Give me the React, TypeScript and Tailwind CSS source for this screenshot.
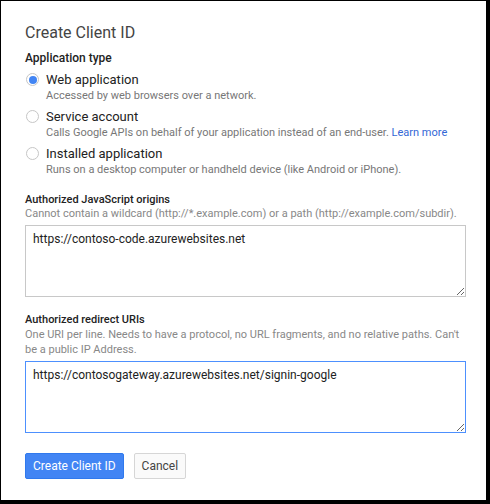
import { useState } from "react";

type Option = { id: string; label: string; desc: string; link?: string };

const options: Option[] = [
  { id: "web", label: "Web application", desc: "Accessed by web browsers over a network." },
  {
    id: "service",
    label: "Service account",
    desc: "Calls Google APIs on behalf of your application instead of an end-user.",
    link: "Learn more",
  },
  {
    id: "installed",
    label: "Installed application",
    desc: "Runs on a desktop computer or handheld device (like Android or iPhone).",
  },
];

function Radio({ checked }: { checked: boolean }) {
  return (
    <span className="w-[13px] h-[13px] rounded-full border border-[#c6c6c6] bg-white flex items-center justify-center shrink-0 mt-[2px]">
      {checked && <span className="w-[8px] h-[8px] rounded-full bg-[#4285f4]" />}
    </span>
  );
}

export default function App() {
  const [type, setType] = useState("web");

  return (
    <div
      className="w-[490px] h-[504px] bg-white border-t border-l border-r-4 border-b-4 border-black text-[#222] overflow-hidden"
      style={{ fontFamily: "Roboto, 'Liberation Sans', Arial, sans-serif" }}
    >
      <div className="pl-[24px] pr-[20px] pt-[22px]">
        <h1 className="text-[16px] leading-[19px] text-[#444] font-normal">Create Client ID</h1>

        {/* Application type */}
        <div className="mt-[8px] text-[12px] leading-[16px] font-medium text-[#222]">Application type</div>
        <div className="mt-[5px] flex flex-col gap-[5px]">
          {options.map((o) => (
            <label key={o.id} className="flex gap-[7px] pl-[1px] cursor-pointer" onClick={() => setType(o.id)}>
              <Radio checked={type === o.id} />
              <div>
                <div className="text-[13px] leading-[17px] text-[#222]">{o.label}</div>
                <div className="text-[11px] leading-[15px] text-[#777]">
                  {o.desc}
                  {o.link && <span className="text-[#3367d6]"> {o.link}</span>}
                </div>
              </div>
            </label>
          ))}
        </div>

        {/* JS origins */}
        <div className="mt-[16px] text-[11px] leading-[14px] font-medium text-[#222]">
          Authorized JavaScript origins
        </div>
        <div className="text-[11px] leading-[14px] text-[#888]">
          Cannot contain a wildcard (http://*.example.com) or a path (http://example.com/subdir).
        </div>
        <textarea
          className="mt-[4px] block w-[441px] h-[72px] border border-[#c8c8c8] px-[7px] py-[5px] text-[12px] leading-[16px] text-[#222] outline-none resize"
          defaultValue="https://contoso-code.azurewebsites.net"
          style={{ fontFamily: "Roboto, 'Liberation Sans', Arial, sans-serif" }}
        />

        {/* Redirect URIs */}
        <div className="mt-[16px] text-[11px] leading-[14px] font-medium text-[#222]">Authorized redirect URIs</div>
        <div className="text-[11px] leading-[15px] text-[#888]">
          One URI per line. Needs to have a protocol, no URL fragments, and no relative paths. Can't be a public IP
          Address.
        </div>
        <textarea
          className="mt-[4px] block w-[441px] h-[72px] border border-[#4d90fe] px-[7px] py-[5px] text-[12px] leading-[16px] text-[#222] outline-none resize"
          defaultValue="https://contosogateway.azurewebsites.net/signin-google"
          style={{ fontFamily: "Roboto, 'Liberation Sans', Arial, sans-serif" }}
        />

        {/* Buttons */}
        <div className="mt-[20px] flex gap-[10px]">
          <button className="h-[26px] px-[7px] rounded-[2px] bg-[#4285f4] border border-[#3079ed] text-white text-[12px]">
            Create Client ID
          </button>
          <button className="h-[26px] px-[7px] rounded-[2px] bg-[#fafafa] border border-[#d6d6d6] text-[#444] text-[12px]">
            Cancel
          </button>
        </div>
      </div>
    </div>
  );
}
